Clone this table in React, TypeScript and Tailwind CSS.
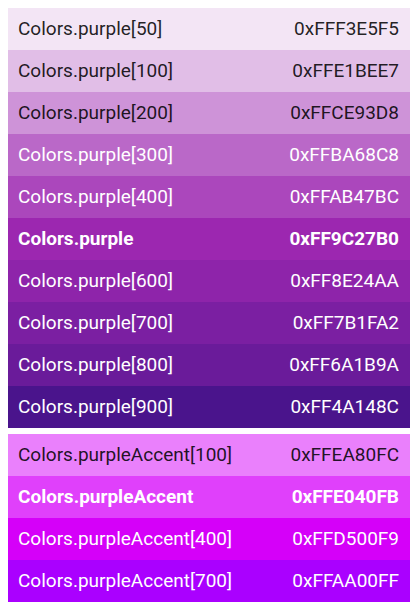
import React from "react";

type Row = { name: string; hex: string; bg: string; dark: boolean; bold?: boolean };

const purple: Row[] = [
  { name: "Colors.purple[50]", hex: "0xFFF3E5F5", bg: "bg-[#F3E5F5]", dark: false },
  { name: "Colors.purple[100]", hex: "0xFFE1BEE7", bg: "bg-[#E1BEE7]", dark: false },
  { name: "Colors.purple[200]", hex: "0xFFCE93D8", bg: "bg-[#CE93D8]", dark: false },
  { name: "Colors.purple[300]", hex: "0xFFBA68C8", bg: "bg-[#BA68C8]", dark: true },
  { name: "Colors.purple[400]", hex: "0xFFAB47BC", bg: "bg-[#AB47BC]", dark: true },
  { name: "Colors.purple", hex: "0xFF9C27B0", bg: "bg-[#9C27B0]", dark: true, bold: true },
  { name: "Colors.purple[600]", hex: "0xFF8E24AA", bg: "bg-[#8E24AA]", dark: true },
  { name: "Colors.purple[700]", hex: "0xFF7B1FA2", bg: "bg-[#7B1FA2]", dark: true },
  { name: "Colors.purple[800]", hex: "0xFF6A1B9A", bg: "bg-[#6A1B9A]", dark: true },
  { name: "Colors.purple[900]", hex: "0xFF4A148C", bg: "bg-[#4A148C]", dark: true },
];

const accent: Row[] = [
  { name: "Colors.purpleAccent[100]", hex: "0xFFEA80FC", bg: "bg-[#EA80FC]", dark: false },
  { name: "Colors.purpleAccent", hex: "0xFFE040FB", bg: "bg-[#E040FB]", dark: true, bold: true },
  { name: "Colors.purpleAccent[400]", hex: "0xFFD500F9", bg: "bg-[#D500F9]", dark: true },
  { name: "Colors.purpleAccent[700]", hex: "0xFFAA00FF", bg: "bg-[#AA00FF]", dark: true },
];

function Swatch({ r }: { r: Row }) {
  return (
    <div
      className={`${r.bg} h-[42px] flex items-center justify-between pl-[10px] pr-[11px] text-[19px] ${
        r.dark ? "text-white" : "text-[rgba(0,0,0,0.87)]"
      } ${r.bold ? "font-bold" : "font-normal"}`}
    >
      <span>{r.name}</span>
      <span>{r.hex}</span>
    </div>
  );
}

export default function App() {
  return (
    <div
      className="w-[418px] h-[609px] bg-white p-[8px] flex flex-col gap-[6px]"
      style={{ fontFamily: "Roboto, 'Noto Sans', sans-serif" }}
    >
      <div className="flex flex-col">
        {purple.map((r) => (
          <Swatch key={r.name} r={r} />
        ))}
      </div>
      <div className="flex flex-col">
        {accent.map((r) => (
          <Swatch key={r.name} r={r} />
        ))}
      </div>
    </div>
  );
}
